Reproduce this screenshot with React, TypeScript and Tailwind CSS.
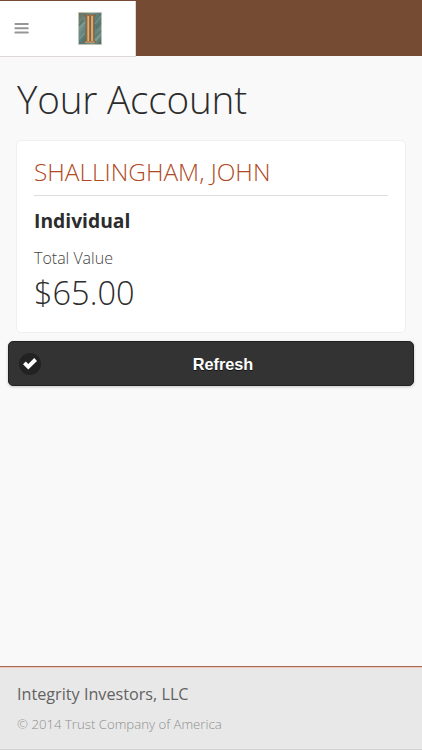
import React from 'react';

interface AccountCardProps {
    owner: string;
    accountType: string;
    totalValue: string;
}

const MenuIcon: React.FC = () => (
    <svg width="15" height="11" viewBox="0 0 15 11" fill="#969696">
        <rect x="0.5" y="0" width="14.2" height="2" rx="0.7" />
        <rect x="0.5" y="4.3" width="14.2" height="2" rx="0.7" />
        <rect x="0.5" y="8.6" width="14.2" height="2" rx="0.7" />
    </svg>
);

const Logo: React.FC = () => (
    <svg width="24" height="33" viewBox="0 0 24 33">
        <defs>
            <linearGradient id="stone" x1="0" y1="0" x2="1" y2="1">
                <stop offset="0" stopColor="#65705c" />
                <stop offset="0.3" stopColor="#70918a" />
                <stop offset="0.55" stopColor="#55766f" />
                <stop offset="0.8" stopColor="#74918a" />
                <stop offset="1" stopColor="#4c655d" />
            </linearGradient>
        </defs>
        <rect width="24" height="33" fill="#d8d3c2" />
        <rect x="0.8" y="0.8" width="22.4" height="31.4" fill="url(#stone)" />
        <path d="M1 17l6-7M1 27l6-6M17 12l6-8M17 29l6-6" stroke="#93aea6" strokeWidth="1.6" opacity="0.45" />
        <path d="M1 13l5-5M18 16l5-5M17 25l6-6" stroke="#3d5c54" strokeWidth="1.6" opacity="0.4" />
        <path d="M6 2.500h12v1.500l-1.500 1v23l1.500 2v1H6v-1l1.500-2V5L6 4z" fill="#7a6040" />
        <path d="M7 3h10L15.800 5v23l1.200 2.500H7L8.300 28V5z" fill="#9a7047" />
        <path d="M10.300 4v25M14 4v25" stroke="#dcb27c" strokeWidth="1.700" />
        <path d="M12.200 4v25" stroke="#85592f" strokeWidth="1" />
        <path d="M7 30.200h10" stroke="#cfaa76" strokeWidth="1" />
    </svg>
);

const CheckIcon: React.FC = () => (
    <svg width="14" height="12" viewBox="0 0 14 12" fill="#ffffff">
        <path d="M14 3L11.200 0 5.300 5.900 2.800 3.500 0 6.300 5.300 11.600z" />
    </svg>
);

const AccountCard: React.FC<AccountCardProps> = ({ owner, accountType, totalValue }) => (
    <section className="mx-4 h-[193px] rounded-[5px] border border-[#f0f0f0] bg-white px-[17px] pt-[14px]">
        <h2 className="h-[41px] border-b border-[#dddddd] text-[24.4px] leading-[33px] font-light whitespace-nowrap text-[#b04a24]">{owner}</h2>
        <h3 className="mt-[11px] text-[19.3px] leading-7 font-bold">{accountType}</h3>
        <p className="mt-[11px] text-[16px] leading-6 font-light text-[#444444]">Total Value</p>
        <p className="mt-[2px] text-[32.5px] leading-[42px] font-light">{totalValue}</p>
    </section>
);

const App: React.FC = () => {
    return (
        <div className="flex h-screen flex-col overflow-hidden bg-[#f9f9f9] font-['Open_Sans',sans-serif] text-[#2c2c2c]">
            <header className="h-14 shrink-0 bg-[#754c33] pt-px">
                <div className="flex h-14 w-[136px] items-start border-r border-b border-[#ddd8d5] bg-white">
                    <button className="mt-[22px] ml-[14px]" aria-label="Menu">
                        <MenuIcon />
                    </button>
                    <div className="mt-[11px] ml-[49px]">
                        <Logo />
                    </div>
                </div>
            </header>
            <main className="flex-1">
                <h1 className="mt-4 mb-[14px] ml-[17px] text-[38.7px] leading-[54px] font-light tracking-[-0.2px] whitespace-nowrap">Your Account</h1>
                <AccountCard owner="SHALLINGHAM, JOHN" accountType="Individual" totalValue="$65.00" />
                <button className="mt-2 ml-2 flex h-[45px] w-[406px] items-center rounded-[5px] border border-[#222222] bg-[#333333] pl-[10px] font-['Liberation_Sans',sans-serif] text-[16.3px] font-bold text-white shadow-[0_1px_3px_rgba(0,0,0,0.2)]">
                    <span className="flex size-[22px] items-center justify-center rounded-full bg-[#222222]">
                        <CheckIcon />
                    </span>
                    <span className="flex-1 pt-px pr-[8px] text-center [text-shadow:0_1px_0_#111]">Refresh</span>
                </button>
            </main>
            <footer className="h-[84px] shrink-0 border-t border-[#a66b56] border-b border-b-[#d2d2d2] bg-[#e8e8e8] pl-[17px] shadow-[inset_0_1px_0_#efc9b8]">
                <p className="mt-[15px] text-[16.2px] leading-6 text-[#626262]">Integrity Investors, LLC</p>
                <p className="mt-2 text-[13.2px] leading-5 font-light text-[#8f8f8f]">© 2014 Trust Company of America</p>
            </footer>
        </div>
    );
};

export default App;
